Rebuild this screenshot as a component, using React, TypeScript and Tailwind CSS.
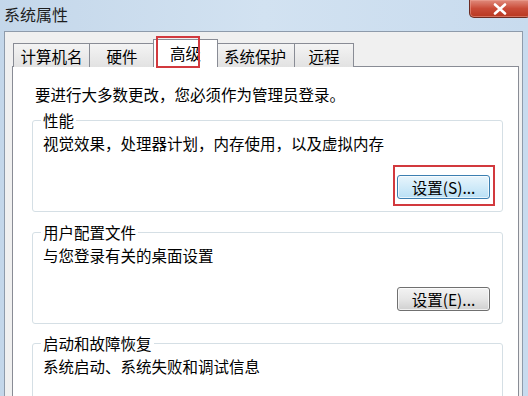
import React from "react";

interface TabProps {
  label: string;
  className: string;
  active?: boolean;
}

function Tab({ label, className, active }: TabProps) {
  if (active) {
    return (
      <div
        className={`relative z-10 flex h-[28px] items-center justify-center border border-b-0 border-[#898c95] bg-white pb-[2px] ${className}`}
      >
        {label}
        <div className="absolute left-[2px] top-[-4px] h-[32px] w-[44px] border-2 border-[#d2393e]" />
      </div>
    );
  }
  return (
    <div
      className={`flex h-[24px] items-center justify-center border border-b-0 border-[#898c95] bg-gradient-to-b from-[#f4f4f4] to-[#e2e2e2] ${className}`}
    >
      {label}
    </div>
  );
}

interface GroupProps {
  title: string;
  desc: string;
  button?: string;
  focused?: boolean;
  className?: string;
}

function Group({ title, desc, button, focused, className = "" }: GroupProps) {
  return (
    <fieldset
      className={`rounded-[3px] border border-[#d5dfe5] pl-[8px] pr-[12px] pb-[12px] ${className}`}
    >
      <legend className="px-[2px] leading-[16px]">{title}</legend>
      <div className="mt-[5px] pl-[2px]">{desc}</div>
      <div className="mt-[22px] flex justify-end">
        <div className="relative">
          <div
            className={
              focused
                ? "flex h-[24px] w-[93px] items-center justify-center rounded-[3px] border border-[#3c7fb1] bg-gradient-to-b from-[#e8f5fc] to-[#b9e0f5] shadow-[inset_0_0_0_1px_#ffffffaa]"
                : "flex h-[24px] w-[93px] items-center justify-center rounded-[3px] border border-[#707070] bg-gradient-to-b from-[#f3f3f3] via-[#e6e6e6] to-[#d0d0d0] shadow-[inset_0_0_0_1px_#ffffffaa]"
            }
          >
            {button}
          </div>
          {focused && (
            <div className="absolute left-[-4px] top-[-10px] h-[41px] w-[102px] border-2 border-[#d2393e]" />
          )}
        </div>
      </div>
    </fieldset>
  );
}

export default function App() {
  return (
    <div className="flex h-[396px] w-[528px] flex-col overflow-hidden bg-gradient-to-r from-[#c4d7ea] via-[#d2e2f1] to-[#c8dbee] font-['Noto_Sans_CJK_SC','Liberation_Sans',sans-serif] text-[15.5px] leading-[20px] text-black">
      {/* title bar */}
      <div className="flex h-[31px] shrink-0 items-start justify-between">
        <div className="pl-[4px] pt-[4px] text-[16px] text-[#1e1e1e]">系统属性</div>
        <div className="mr-[-3px] flex h-[18px] w-[62px] items-center justify-center rounded-b-[5px] border border-t-0 border-[#6b2b22] bg-gradient-to-b from-[#e08a7c] via-[#c94b38] to-[#b8371f] shadow-[inset_0_0_0_1px_#f0a89a80]">
          <svg width="16" height="12" viewBox="0 0 16 12">
            <path
              d="M3 1.5 L13 10.5 M13 1.5 L3 10.5"
              stroke="#fff"
              strokeWidth="2.6"
              strokeLinecap="round"
            />
          </svg>
        </div>
      </div>

      {/* window body */}
      <div className="flex flex-1">
        <div className="w-[4px] shrink-0" />
        <div className="flex-1 border-l border-t border-r border-[#8e9bab] bg-[#f0f0f0] pl-[7px] pt-[7px]">
          <div className="relative z-10 -mb-px flex h-[28px] items-end pl-[1px]">
            <Tab label="计算机名" className="w-[77px]" />
            <Tab label="硬件" className="-ml-px w-[66px]" />
            <Tab label="高级" className="-ml-[2px] -mr-[2px] w-[65px]" active />
            <Tab label="系统保护" className="-ml-px w-[80px]" />
            <Tab label="远程" className="-ml-px w-[60px]" />
          </div>
          <div className="h-[340px] w-[507px] border border-[#898c95] bg-white pl-[19px] pr-[15px] pt-[17px]">
            <div className="pl-[3px]">要进行大多数更改，您必须作为管理员登录。</div>
            <Group
              className="mt-[8px]"
              title="性能"
              desc="视觉效果，处理器计划，内存使用，以及虚拟内存"
              button="设置(S)..."
              focused
            />
            <Group
              className="mt-[12px]"
              title="用户配置文件"
              desc="与您登录有关的桌面设置"
              button="设置(E)..."
            />
            <Group
              className="mt-[11px]"
              title="启动和故障恢复"
              desc="系统启动、系统失败和调试信息"
            />
          </div>
        </div>
        <div className="w-[5px] shrink-0" />
      </div>
    </div>
  );
}
